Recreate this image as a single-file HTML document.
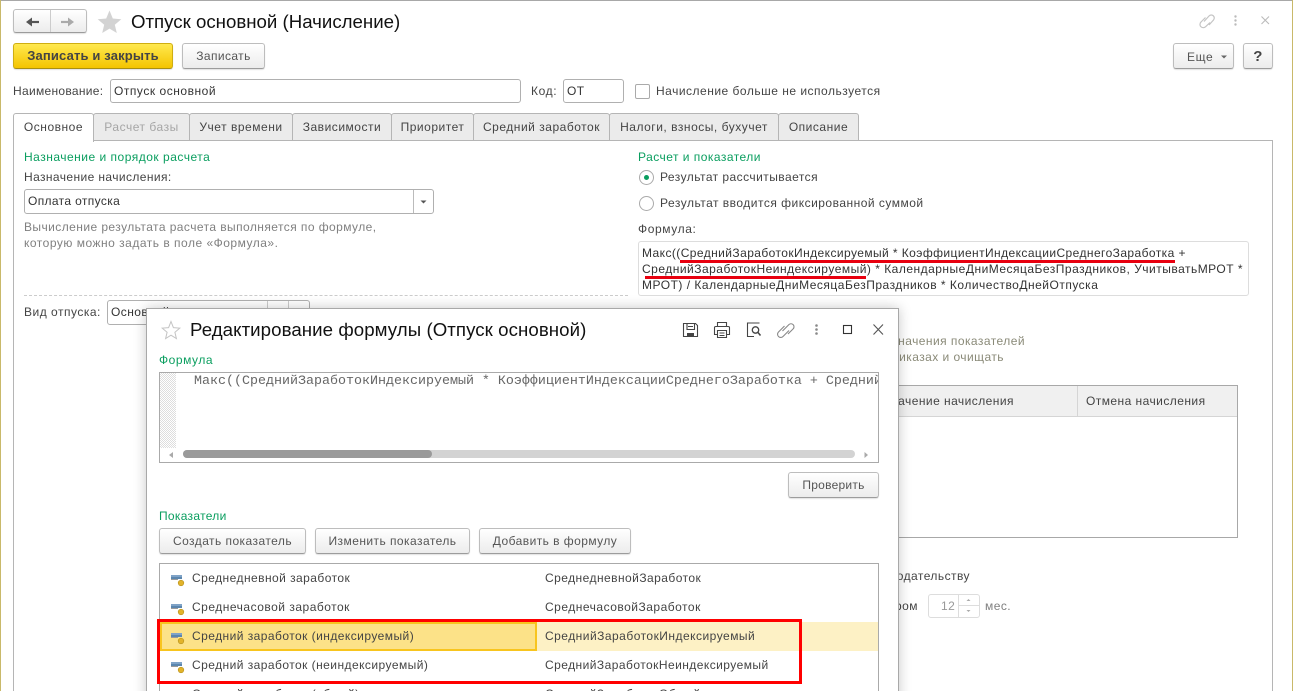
<!DOCTYPE html>
<html lang="ru"><head><meta charset="utf-8"><title>Отпуск основной</title>
<style>
html,body{margin:0;padding:0;background:#fff}
#p{position:relative;width:1293px;height:691px;overflow:hidden;background:#fff;font-family:"Liberation Sans","Noto Sans CJK SC",sans-serif;font-size:12px;letter-spacing:.45px;color:#444}
#p div,#p span.a{position:absolute;box-sizing:border-box}
.t{position:absolute;white-space:nowrap;line-height:16px;height:16px}
.g{color:#0a9e5f}.m{color:#808080}
.b{background:linear-gradient(#fff,#ececec);border:1px solid #bdbdbd;border-bottom:1px solid #9c9c9c;border-radius:3px;box-shadow:0 1px 1px rgba(0,0,0,.12);text-align:center;line-height:24px;white-space:nowrap;color:#555}
.i{background:#fff;border:1px solid #b0b0b0;border-radius:3px;line-height:22px;padding-left:3px;white-space:nowrap;color:#333}
.tab{top:113px;height:28px;background:#ebebeb;border:1px solid #b5b5b5;border-radius:3px 3px 0 0;text-align:center;line-height:26px;white-space:nowrap;color:#444;letter-spacing:.52px}
svg{position:absolute;overflow:visible}
</style></head><body><div id="p">
<div style="left:0;top:0;width:1293px;height:1px;background:#a8a8a8"></div>
<div style="left:0;top:0;width:1px;height:691px;background:#c9b96a"></div>
<div style="left:1292px;top:0;width:1px;height:691px;background:#c9b96a"></div>

<div class="b" style="left:13px;top:9px;width:74px;height:24px"></div>
<div style="left:50px;top:10px;width:1px;height:22px;background:#ccc"></div>
<svg style="left:0;top:0" width="130" height="40"><path d="M29 22H39" stroke="#555" stroke-width="2.200" fill="none"/><path d="M26 22L32 17.500V26.500Z" fill="#555"/><path d="M61 22H71" stroke="#aaa" stroke-width="2.200" fill="none"/><path d="M74 22L68 17.500V26.500Z" fill="#aaa"/><path d="M109.500 10.500L112.800 18.500L121.300 19.200L114.800 24.800L116.800 33L109.500 28.600L102.200 33L104.200 24.800L97.700 19.200L106.200 18.500Z" fill="#d3d3d3"/></svg>
<span class="t" style="left:131px;top:11px;font-size:18.670px;letter-spacing:0;line-height:22px;height:22px;color:#111">Отпуск основной (Начисление)</span>

<div class="b" style="left:13px;top:43px;width:160px;height:26px;background:linear-gradient(#ffe94f,#f4c400);border-color:#cfae12;border-bottom-color:#a98f10;color:#444;font-weight:bold;font-size:13px;letter-spacing:.15px">Записать и закрыть</div>
<div class="b" style="left:182px;top:43px;width:83px;height:26px;letter-spacing:.4px">Записать</div>
<div class="b" style="left:1173px;top:43px;width:61px;height:26px"></div>
<span class="t" style="left:1187px;top:49px;letter-spacing:.6px;color:#555">Еще</span>
<svg style="left:0;top:0" width="1293" height="70"><path d="M1221 55.500H1227L1224 58.500Z" fill="#666"/></svg>
<div class="b" style="left:1243px;top:43px;width:30px;height:26px;font-size:15px;font-weight:bold;color:#444;line-height:26px">?</div>
<svg style="left:0;top:0" width="1293" height="40"><g stroke="#c4c4c4" fill="none" stroke-width="1.200"><path d="M1205.500 17.500L1201 22a3 3 0 0 0 4.500 4.800L1210 22.500M1204 21.500L1209 16a3 3 0 0 1 4.500 4L1209 25"/></g><g fill="#bbb"><circle cx="1235.500" cy="16.500" r="1.200"/><circle cx="1235.500" cy="20.500" r="1.200"/><circle cx="1235.500" cy="24.500" r="1.200"/></g><path d="M1261.500 16.500L1269 24M1269 16.500L1261.500 24" stroke="#bbb" stroke-width="1.100"/></svg>

<span class="t" style="left:13px;top:83px;letter-spacing:.3px">Наименование:</span>
<div class="i" style="left:110px;top:79px;width:411px;height:24px;letter-spacing:.53px">Отпуск основной</div>
<span class="t" style="left:531px;top:83px;letter-spacing:.6px">Код:</span>
<div class="i" style="left:563px;top:79px;width:61px;height:24px">ОТ</div>
<div style="left:635px;top:84px;width:15px;height:15px;border:1px solid #aaa;border-radius:2px;background:#fff"></div>
<span class="t" style="left:656px;top:83px;letter-spacing:.5px">Начисление больше не используется</span>

<div style="left:13px;top:140px;width:1260px;height:560px;border:1px solid #b5b5b5;background:#fff"></div>
<div class="tab" style="left:13px;width:81px;background:#fff;border-bottom:0;height:29px">Основное</div>
<div class="tab" style="left:93px;width:97px;color:#a6a6a6">Расчет базы</div>
<div class="tab" style="left:189px;width:104px">Учет времени</div>
<div class="tab" style="left:292px;width:100px">Зависимости</div>
<div class="tab" style="left:391px;width:83px">Приоритет</div>
<div class="tab" style="left:473px;width:137px">Средний заработок</div>
<div class="tab" style="left:609px;width:170px">Налоги, взносы, бухучет</div>
<div class="tab" style="left:778px;width:81px">Описание</div>

<span class="t g" style="left:24px;top:149px;letter-spacing:.5px">Назначение и порядок расчета</span>
<span class="t" style="left:24px;top:169px;letter-spacing:.4px">Назначение начисления:</span>
<div class="i" style="left:24px;top:189px;width:410px;height:25px;letter-spacing:.36px">Оплата отпуска</div>
<div style="left:413px;top:190px;width:1px;height:23px;background:#bbb"></div>
<svg style="left:0;top:0" width="440" height="220"><path d="M420.500 200.500H426.500L423.500 203.500Z" fill="#555"/></svg>
<span class="t m" style="left:24px;top:219px;letter-spacing:.43px">Вычисление результата расчета выполняется по формуле,</span>
<span class="t m" style="left:24px;top:235px;letter-spacing:.5px">которую можно задать в поле «Формула».</span>

<span class="t g" style="left:638px;top:149px;letter-spacing:.47px">Расчет и показатели</span>
<svg style="left:0;top:0" width="660" height="215"><circle cx="646.500" cy="177.500" r="7" fill="#fff" stroke="#aaa"/><circle cx="646.500" cy="177.500" r="2.500" fill="#0a9e5f"/><circle cx="646.500" cy="203.500" r="7" fill="#fff" stroke="#aaa"/></svg>
<span class="t" style="left:660px;top:169px">Результат рассчитывается</span>
<span class="t" style="left:660px;top:195px;letter-spacing:.49px">Результат вводится фиксированной суммой</span>
<span class="t" style="left:638px;top:221px;letter-spacing:.6px">Формула:</span>
<div style="left:638px;top:241px;width:611px;height:55px;border:1px solid #ddd;border-radius:3px;background:#fff"></div>
<span class="t" style="left:642px;top:245px;color:#333;letter-spacing:.42px">Макс((СреднийЗаработокИндексируемый * КоэффициентИндексацииСреднегоЗаработка +</span>
<span class="t" style="left:642px;top:261px;color:#333;letter-spacing:.49px">СреднийЗаработокНеиндексируемый) * КалендарныеДниМесяцаБезПраздников, УчитыватьМРОТ *</span>
<span class="t" style="left:642px;top:277px;color:#333;letter-spacing:.5px">МРОТ) / КалендарныеДниМесяцаБезПраздников * КоличествоДнейОтпуска</span>
<div style="left:680px;top:260px;width:495px;height:3px;background:#e8000f"></div>
<div style="left:645px;top:276px;width:221px;height:3px;background:#e8000f"></div>

<div style="left:24px;top:295px;width:604px;height:0;border-top:1px dashed #ccc"></div>
<span class="t" style="left:24px;top:304px;letter-spacing:.5px">Вид отпуска:</span>
<div class="i" style="left:107px;top:300px;width:203px;height:25px">Основной</div>
<div style="left:267px;top:301px;width:1px;height:23px;background:#ccc"></div>
<div style="left:288px;top:301px;width:1px;height:23px;background:#ccc"></div>

<span class="t" style="right:268px;top:333px;color:#8a8a78">значения показателей</span>
<span class="t" style="right:289px;top:349px;color:#8a8a78">приказах и очищать</span>
<div style="left:700px;top:385px;width:538px;height:153px;border:1px solid #a8a8a8;background:#fff"></div>
<div style="left:701px;top:386px;width:536px;height:31px;background:#f0f0f0;border-bottom:1px solid #d5d5d5"></div>
<div style="left:1077px;top:386px;width:1px;height:30px;background:#d5d5d5"></div>
<span class="t" style="right:279px;top:393px">Назначение начисления</span>
<span class="t" style="left:1086px;top:393px">Отмена начисления</span>
<span class="t" style="right:323px;top:568px">законодательству</span>
<span class="t" style="right:375px;top:598px">размером</span>
<div style="left:928px;top:594px;width:52px;height:24px;border:1px solid #ddd;border-radius:3px;background:#fff"></div>
<div style="left:958px;top:595px;width:1px;height:22px;background:#ddd"></div>
<div style="left:959px;top:605px;width:20px;height:1px;background:#ddd"></div>
<span class="t" style="left:941px;top:598px;color:#999">12</span>
<svg style="left:0;top:0" width="1000" height="620"><path d="M966.500 601H970.500L968.500 599ZM966.500 610H970.500L968.500 612Z" fill="#aaa"/></svg>
<span class="t m" style="left:985px;top:598px">мес.</span>

<!-- dialog -->
<div style="left:146px;top:308px;width:753px;height:400px;background:#fff;border:1px solid #a8a8a8;box-shadow:0 0 12px rgba(0,0,0,.22)"></div>
<svg style="left:0;top:0" width="900" height="345"><path d="M171 321.500L173.400 327.600L179.800 328.100L174.900 332.300L176.400 338.600L171 335.200L165.600 338.600L167.100 332.300L162.200 328.100L168.600 327.600Z" fill="#fff" stroke="#c4c4c4"/></svg>
<span class="t" style="left:190px;top:319px;font-size:18.670px;letter-spacing:.07px;line-height:22px;height:22px;color:#111">Редактирование формулы (Отпуск основной)</span>
<svg style="left:0;top:0" width="900" height="345" fill="none" stroke="#444" stroke-width="1.100">
<path d="M684.500 323.500H695.500L697.500 325.500V336.500H683.500V323.500ZM687 323.500V329.500H694.500V323.500M688 326.500H693"/><rect x="687" y="333" width="7" height="3.500" fill="#444" stroke="none"/>
<path d="M717.500 326.500V322.500H726.500V326.500M717 334.500H714.500V327.500Q714.500 326.500 716 326.500H728Q729.500 326.500 729.500 327.500V334.500H727M717.500 330.500H726.500V337.500H717.500ZM719.500 333H724.500M719.500 335.500H724.500"/>
<path d="M754.500 323H747.500V336.500H754M754.500 323H759.500"/><circle cx="755.500" cy="330" r="3.200" stroke-width="1.300"/><path d="M758 332.500L760.500 335.500" stroke-width="1.500"/>
<path stroke="#888" d="M784.500 326L778.500 332a3 3 0 0 0 4.500 4.500L789 330.500M782.500 331L789 324.500a3 3 0 0 1 4 4.500L788 334"/>
<rect x="843.500" y="325.500" width="8" height="8" stroke="#333"/>
<path d="M873.500 324.500L883 334.500M883 324.500L873.500 334.500" stroke="#555"/>
</svg>
<svg style="left:0;top:0" width="900" height="345" fill="#888"><circle cx="816.500" cy="325.500" r="1.300"/><circle cx="816.500" cy="329.500" r="1.300"/><circle cx="816.500" cy="333.500" r="1.300"/></svg>

<span class="t g" style="left:159px;top:352px;letter-spacing:.55px">Формула</span>
<div style="left:159px;top:372px;width:720px;height:91px;border:1px solid #aaa;background:#fff;overflow:hidden">
<div style="left:0;top:0;width:16px;height:75px;background:repeating-conic-gradient(#ddd 0 25%,#fff 0 50%) 0 0/2px 2px"></div>
<span class="t" style="left:34px;top:1px;font-family:'Liberation Mono',monospace;font-size:13.330px;letter-spacing:0;color:#666">Макс((СреднийЗаработокИндексируемый * КоэффициентИндексацииСреднегоЗаработка + СреднийЗаработокНеиндексируемый)</span>
<div style="left:0;top:75px;width:718px;height:14px;background:#fff"></div>
<div style="left:23px;top:77px;width:672px;height:8px;border-radius:4px;background:#d3d3d3"></div>
<div style="left:23px;top:77px;width:249px;height:8px;border-radius:4px;background:#9a9a9a"></div>
</div>
<svg style="left:0;top:0" width="900" height="470"><path d="M169 455L173 452V458ZM868 455L864.500 452V458Z" fill="#aaa"/></svg>
<div class="b" style="left:788px;top:472px;width:91px;height:26px;letter-spacing:.25px">Проверить</div>
<span class="t g" style="left:159px;top:508px;letter-spacing:.3px">Показатели</span>
<div class="b" style="left:159px;top:528px;width:147px;height:26px">Создать показатель</div>
<div class="b" style="left:315px;top:528px;width:155px;height:26px">Изменить показатель</div>
<div class="b" style="left:479px;top:528px;width:152px;height:26px">Добавить в формулу</div>

<div style="left:159px;top:563px;width:720px;height:140px;border:1px solid #aaa;background:#fff"></div>
<div style="left:160px;top:622px;width:718px;height:29px;background:#fdf1c5"></div>
<div style="left:160px;top:622px;width:377px;height:29px;background:#fce288;border:2px solid #f8c51e"></div>
<svg style="left:0;top:0" width="200" height="691"><defs><g id="ic"><rect x="171" y="0" width="11" height="2" fill="#7fa3c7"/><rect x="171" y="2" width="11" height="2" fill="#5b86ae"/><rect x="171" y="4" width="7" height="1" fill="#9a9a9a"/><circle cx="181" cy="8" r="2.800" fill="#e2b32a" stroke="#b8931f" stroke-width=".6"/></g></defs><use href="#ic" y="575"/><use href="#ic" y="604"/><use href="#ic" y="633"/><use href="#ic" y="662"/></svg>
<span class="t" style="left:192px;top:570px">Среднедневной заработок</span><span class="t" style="left:545px;top:570px">СреднедневнойЗаработок</span>
<span class="t" style="left:192px;top:599px;letter-spacing:.5px">Среднечасовой заработок</span><span class="t" style="left:545px;top:599px;letter-spacing:.5px">СреднечасовойЗаработок</span>
<span class="t" style="left:192px;top:628px">Средний заработок (индексируемый)</span><span class="t" style="left:545px;top:628px;letter-spacing:.48px">СреднийЗаработокИндексируемый</span>
<span class="t" style="left:192px;top:657px">Средний заработок (неиндексируемый)</span><span class="t" style="left:545px;top:657px">СреднийЗаработокНеиндексируемый</span>
<span class="t" style="left:192px;top:686px">Средний заработок (общий)</span><span class="t" style="left:545px;top:686px">СреднийЗаработокОбщий</span>
<div style="left:157px;top:619px;width:645px;height:65px;border:3px solid #f00"></div>
</div></body></html>
